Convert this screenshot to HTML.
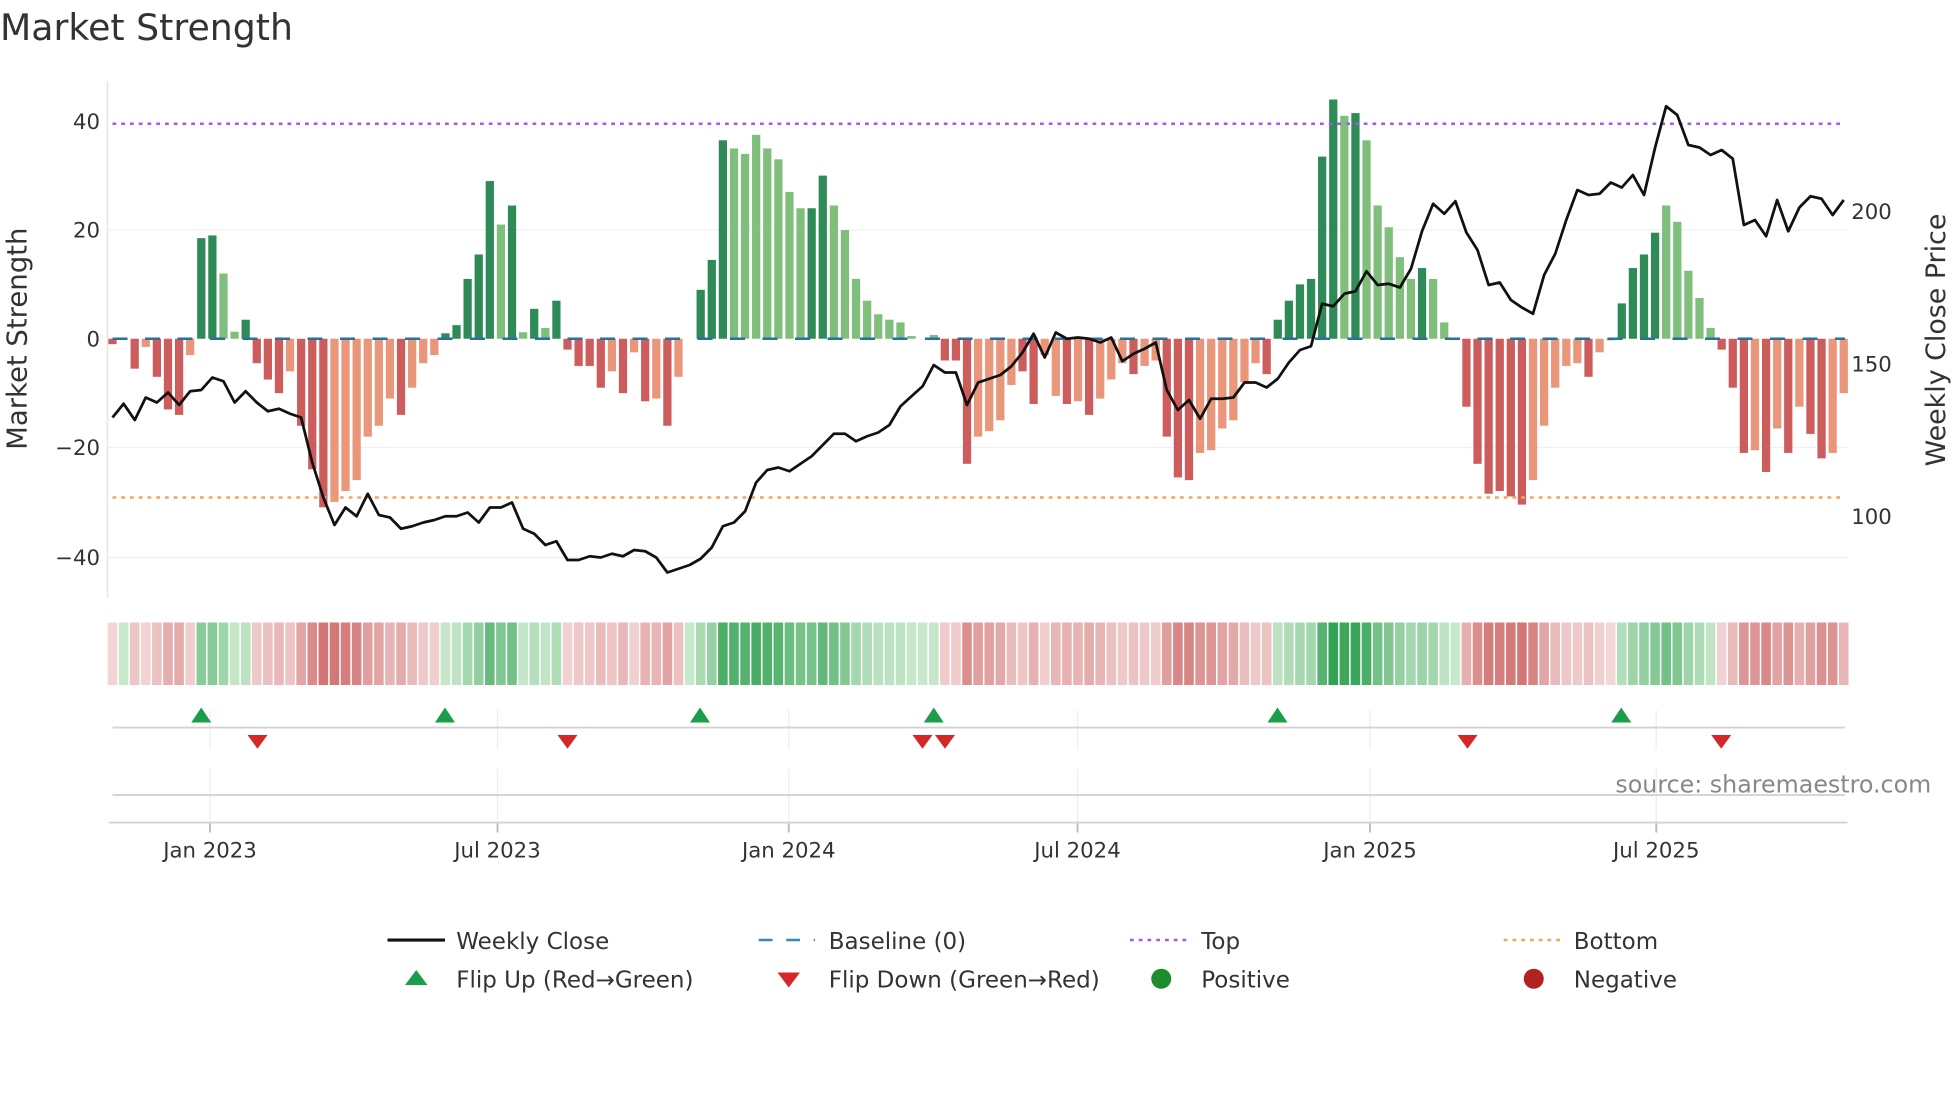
<!DOCTYPE html>
<html><head><meta charset="utf-8"><style>
html,body{margin:0;padding:0;background:#fff;}
svg{display:block;font-family:"DejaVu Sans","Liberation Sans",sans-serif;}
</style></head><body>
<svg id="s" width="1960" height="1102" viewBox="0 0 1568 881.6" xmlns="http://www.w3.org/2000/svg">
<text x="0" y="32" font-size="29" fill="#333">Market Strength</text>
<g stroke="#eef0f4" stroke-width="1">
<line x1="86" y1="184" x2="1478" y2="184"/><line x1="86" y1="358" x2="1478" y2="358"/><line x1="86" y1="446" x2="1478" y2="446"/>
</g>
<line x1="86" y1="65" x2="86" y2="478" stroke="#e6e6e6" stroke-width="1.2"/>
<g font-size="17" fill="#333" text-anchor="end">
<text x="80" y="103">40</text><text x="80" y="190">20</text><text x="80" y="277">0</text><text x="80" y="364">−20</text><text x="80" y="452">−40</text>
</g>
<g font-size="17" fill="#333">
<text x="1481" y="175">200</text><text x="1481" y="297">150</text><text x="1481" y="419">100</text>
</g>
<text transform="translate(21,271) rotate(-90)" font-size="22" fill="#333" text-anchor="middle">Market Strength</text>
<text transform="translate(1556,272) rotate(-90)" font-size="21.5" fill="#333" text-anchor="middle">Weekly Close Price</text>
<g id="bars"></g>
<line x1="90" y1="271" x2="1476" y2="271" stroke="#2b6f9e" stroke-width="2" stroke-dasharray="12,14"/>
<line x1="90" y1="99" x2="1476" y2="99" stroke="#9b5de5" stroke-width="2" stroke-dasharray="3,4"/>
<line x1="90" y1="398" x2="1476" y2="398" stroke="#f4a460" stroke-width="2" stroke-dasharray="3,4"/>
<polyline id="price" fill="none" stroke="#111" stroke-width="2.2" stroke-linejoin="round"/>
<g id="heat"></g>
<g stroke="#eceef2" stroke-width="1" id="vg"></g>
<line x1="90" y1="582" x2="1476" y2="582" stroke="#d3d3d3" stroke-width="1.5"/>
<line x1="90" y1="636" x2="1476" y2="636" stroke="#d3d3d3" stroke-width="1.5"/>
<line x1="87" y1="658" x2="1478" y2="658" stroke="#d3d3d3" stroke-width="1.5"/>
<g id="mk"></g>
<g font-size="17" fill="#333" text-anchor="middle">
<text x="168" y="686">Jan 2023</text><text x="398" y="686">Jul 2023</text><text x="631" y="686">Jan 2024</text><text x="862" y="686">Jul 2024</text><text x="1096" y="686">Jan 2025</text><text x="1325" y="686">Jul 2025</text>
</g>
<text x="1545" y="634" font-size="19" fill="#888" text-anchor="end">source: sharemaestro.com</text>
<g font-size="18.4" fill="#333">
<line x1="310" y1="752" x2="356" y2="752" stroke="#111" stroke-width="2.5"/><text x="365" y="759">Weekly Close</text>
<line x1="607" y1="752" x2="652" y2="752" stroke="#3a86c0" stroke-width="2" stroke-dasharray="11,11"/><text x="663" y="759">Baseline (0)</text>
<line x1="904" y1="752" x2="950" y2="752" stroke="#9b5de5" stroke-width="2" stroke-dasharray="3,4"/><text x="961" y="759">Top</text>
<line x1="1203" y1="752" x2="1249" y2="752" stroke="#f4a460" stroke-width="2" stroke-dasharray="3,4"/><text x="1259" y="759">Bottom</text>
<polygon points="324,788 342,788 333,776" fill="#1a9e4a"/><text x="365" y="790">Flip Up (Red→Green)</text>
<polygon points="622,778 640,778 631,790" fill="#d62728"/><text x="663" y="790">Flip Down (Green→Red)</text>
<circle cx="929" cy="783" r="8" fill="#1e8c2e"/><text x="961" y="790">Positive</text>
<circle cx="1227" cy="783" r="8" fill="#b22222"/><text x="1259" y="790">Negative</text>
</g>
</svg>
<script>
var NS="http://www.w3.org/2000/svg";
function el(t,a,p){var e=document.createElementNS(NS,t);for(var k in a)e.setAttribute(k,a[k]);document.getElementById(p).appendChild(e);}
var V=[[-1,'r'],[0,'n'],[-5.5,'r'],[-1.5,'s'],[-7,'r'],[-13,'r'],[-14,'r'],[-3,'s'],[18.5,'d'],[19,'d'],[12,'l'],[1.3,'l'],[3.5,'d'],[-4.5,'r'],[-7.5,'r'],[-10,'r'],[-6,'s'],[-16,'r'],[-24,'r'],[-31,'r'],[-30,'s'],[-28,'s'],[-26,'s'],[-18,'s'],[-16,'s'],[-11,'s'],[-14,'r'],[-9,'s'],[-4.5,'s'],[-3,'s'],[1,'d'],[2.5,'d'],[11,'d'],[15.5,'d'],[29,'d'],[21,'l'],[24.5,'d'],[1.2,'l'],[5.5,'d'],[2,'l'],[7,'d'],[-2,'r'],[-5,'r'],[-5,'r'],[-9,'r'],[-6,'s'],[-10,'r'],[-2.5,'s'],[-11.5,'r'],[-11,'s'],[-16,'r'],[-7,'s'],[0,'n'],[9,'d'],[14.5,'d'],[36.5,'d'],[35,'l'],[34,'l'],[37.5,'l'],[35,'l'],[33,'l'],[27,'l'],[24,'l'],[24,'d'],[30,'d'],[24.5,'l'],[20,'l'],[11,'l'],[7,'l'],[4.5,'l'],[3.5,'l'],[3,'l'],[0.5,'l'],[0,'n'],[0.7,'l'],[-4,'r'],[-4,'r'],[-23,'r'],[-18,'s'],[-17,'s'],[-15,'s'],[-8.5,'s'],[-6,'r'],[-12,'r'],[-3,'s'],[-10.5,'s'],[-12,'r'],[-11.5,'s'],[-14,'r'],[-11,'s'],[-7.5,'s'],[-4.5,'s'],[-6.5,'r'],[-5,'s'],[-4,'s'],[-18,'r'],[-25.5,'r'],[-26,'r'],[-21,'s'],[-20.5,'s'],[-16.5,'s'],[-15,'s'],[-8,'s'],[-4.5,'s'],[-6.5,'r'],[3.5,'d'],[7,'d'],[10,'d'],[11,'d'],[33.5,'d'],[44,'d'],[41,'l'],[41.5,'d'],[36.5,'l'],[24.5,'l'],[20.5,'l'],[15,'l'],[11,'l'],[13,'d'],[11,'l'],[3,'l'],[0,'n'],[-12.5,'r'],[-23,'r'],[-28.5,'r'],[-28,'r'],[-29,'r'],[-30.5,'r'],[-26,'s'],[-16,'s'],[-9,'s'],[-5,'s'],[-4.5,'s'],[-7,'r'],[-2.5,'s'],[-0.3,'s'],[6.5,'d'],[13,'d'],[15.5,'d'],[19.5,'d'],[24.5,'l'],[21.5,'l'],[12.5,'l'],[7.5,'l'],[2,'l'],[-2,'r'],[-9,'r'],[-21,'r'],[-20.5,'s'],[-24.5,'r'],[-16.5,'s'],[-21,'r'],[-12.5,'s'],[-17.5,'r'],[-22,'r'],[-21,'s'],[-10,'s']];
var C={d:'#2e8b57',l:'#7fbf7b',r:'#cd5c5c',s:'#e9967a',n:'#fff'};
var n=V.length,x0=90,step=(1475-90)/(n-1),k=4.35;
for(var i=0;i<n;i++){var v=V[i][0],x=x0+i*step,h=Math.abs(v)*k;
 if(v!=0)el('rect',{x:x-3.3,y:v>0?271-h:271,width:6.6,height:Math.max(h,0.5),fill:C[V[i][1]]},'bars');
 var f;if(v>=0){var a=Math.min(1,v/44);f='rgb('+Math.round(200-150*a)+','+Math.round(232-70*a)+','+Math.round(203-120*a)+')';}
 else{var a=Math.min(1,-v/31);f='rgb('+Math.round(243-33*a)+','+Math.round(216-100*a)+','+Math.round(216-100*a)+')';}
 el('rect',{x:x-step/2+0.6,y:498,width:step-1.2,height:50,fill:f},'heat');}
var P=[334,323,336,318,322,314,324,313,312,302,305,322,313,322,329,327,331,334,370,398,420,406,413,395,412,414,423,421,418,416,413,413,410,418,406,406,402,423,427,436,433,448,448,445,446,443,445,440,441,446,458,455,452,447,438,421,418,409,386,376,374,377,371,365,356,347,347,353,349,346,340,325,317,309,292,298,298,324,306,303,300,293,282,267,286,266,271,270,271,274,270,289,283,279,274,312,328,320,335,319,319,318,306,306,310,303,290,280,277,243,245,235,233,217,228,227,230,215,185,163,171,161,186,200,228,226,240,246,251,220,203,176,152,156,155,146,150,140,156,118,85,92,116,118,124,120,127,180,176,189,160,185,166,157,159,172,160];
var ps=(1475-90)/(P.length-1),pts=[];for(var i=0;i<P.length;i++)pts.push((90+i*ps).toFixed(1)+','+P[i]);
document.getElementById('price').setAttribute('points',pts.join(' '));
[168,398,631,862,1096,1325].forEach(function(x){el('line',{x1:x,y1:568,x2:x,y2:600},'vg');el('line',{x1:x,y1:615,x2:x,y2:658},'vg');el('line',{x1:x,y1:658,x2:x,y2:666,stroke:'#bbb','stroke-width':1.5},'vg');});
[161,356,560,747,1022,1297].forEach(function(x){el('polygon',{points:(x-8)+',578 '+(x+8)+',578 '+x+',566',fill:'#1a9e4a'},'mk');});
[206,454,738,756,1174,1377].forEach(function(x){el('polygon',{points:(x-8)+',588 '+(x+8)+',588 '+x+',599',fill:'#d62728'},'mk');});
</script>
</body></html>
